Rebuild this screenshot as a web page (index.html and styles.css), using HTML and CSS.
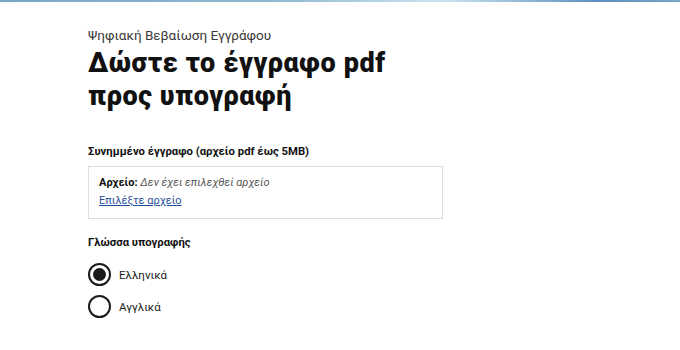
FILE: index.html
```html
<!DOCTYPE html>
<html lang="el">
<head>
<meta charset="utf-8">
<link rel="stylesheet" href="styles.css">
</head>
<body>
<div class="topbar"></div>
<main class="page">
  <p class="caption">Ψηφιακή Βεβαίωση Εγγράφου</p>
  <h1 class="title">Δώστε το έγγραφο pdf<br>προς υπογραφή</h1>

  <div class="field">
    <div class="label">Συνημμένο έγγραφο (αρχείο pdf έως 5MB)</div>
    <div class="filebox">
      <div class="fileline"><b>Αρχείο:</b> <i>Δεν έχει επιλεχθεί αρχείο</i></div>
      <a class="filelink" href="#">Επιλέξτε αρχείο</a>
    </div>
  </div>

  <div class="field">
    <div class="label">Γλώσσα υπογραφής</div>
    <div class="radios">
      <label class="radio"><span class="dot checked"></span><span>Ελληνικά</span></label>
      <label class="radio"><span class="dot"></span><span>Αγγλικά</span></label>
    </div>
  </div>
</main>
</body>
</html>
```

FILE: styles.css
```css
* { box-sizing: border-box; }
html, body { margin: 0; padding: 0; background: #fff; }
body { font-family: "Roboto", "Liberation Sans", sans-serif; color: #0b0c0c; }
.topbar {
  height: 2px;
  background: linear-gradient(90deg, #7aa6c6 0%, #8fb8d3 40%, #c8e4f0 65%, #5e8fc0 88%, #7aa6c6 100%);
}
.page { padding: 24px 0 0 88px; }
.caption { margin: 0; font-size: 13.5px; color: #383838; line-height: 18px; }
.title {
  margin: 3px 0 0 0;
  font-family: "Roboto", sans-serif;
  font-weight: 900;
  font-size: 27px;
  line-height: 33px;
  letter-spacing: 0.6px;
  color: #111;
}
.field { margin-top: 31px; }
.label { font-weight: 700; font-size: 11.3px; line-height: 16px; color: #111; }
.filebox {
  margin-top: 6px;
  width: 355px;
  border: 1px solid #dedede;
  padding: 8px 10px 9px 10px;
  font-size: 11px;
}
.fileline { line-height: 16px; color: #333; }
.fileline b { color: #111; }
.fileline i { color: #555; }
.filelink { display: block; width: max-content; margin-top: 2px; color: #1f4f9a; line-height: 16px; text-decoration: underline; }
.field + .field { margin-top: 16px; }
.radios { margin-top: 12px; display: flex; flex-direction: column; gap: 9px; }
.radio { display: flex; align-items: center; gap: 8px; font-size: 11.5px; color: #222; }
.dot {
  width: 23px; height: 23px; border-radius: 50%;
  border: 2px solid #1a1a1a; position: relative; flex: none;
}
.dot.checked::after {
  content: ""; position: absolute; left: 3px; top: 3px;
  width: 13px; height: 13px; border-radius: 50%; background: #1a1a1a;
}
```
